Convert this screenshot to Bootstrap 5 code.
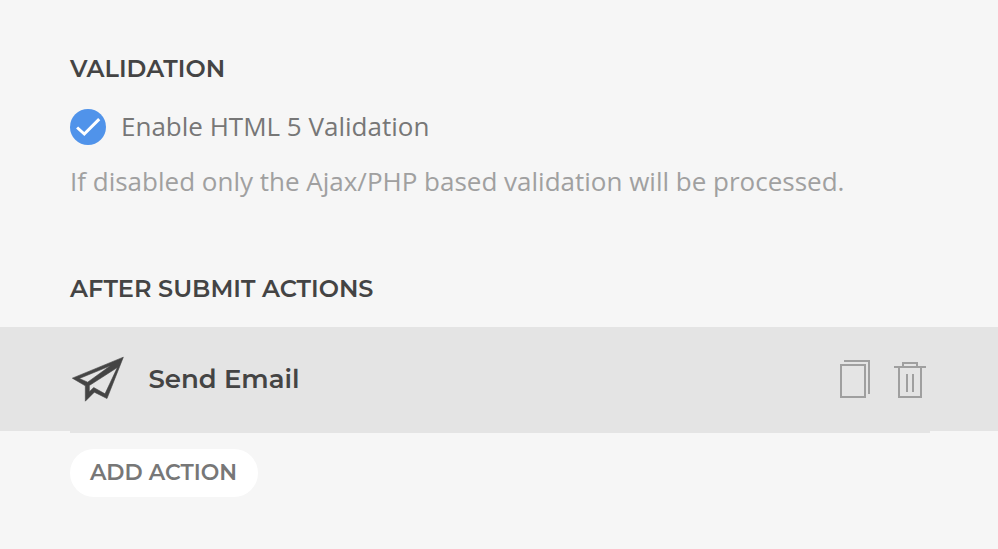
<!DOCTYPE html>
<html lang="en">
<head>
<meta charset="utf-8">
<meta name="viewport" content="width=device-width, initial-scale=1">
<title>Form settings</title>
<link rel="stylesheet" href="https://cdn.jsdelivr.net/npm/bootstrap@5.3.0/dist/css/bootstrap.min.css">
<style>
body{background:#f6f6f6;color:#444;font-family:"Open Sans","Noto Sans",sans-serif;height:549px;overflow:hidden}
.heading{font-family:Montserrat,Inter,sans-serif;font-weight:600;white-space:nowrap;line-height:30px;font-size:24px}
.settings{padding:54px 70px 0}
.option{height:36px;margin-top:25px;gap:15px;font-size:26px;color:#777}
.option span{padding-bottom:2px}
.hint{font-size:26px;line-height:36px;margin-top:18px;color:#a0a0a0;white-space:nowrap}
.after{margin-top:75px}
.action-row{height:104px;margin-top:23px;padding:0 72px 0 70px;background:#e4e4e4}
.action-name{font-size:26px;margin-left:22.5px}
.tools{gap:24px}
.rule{height:2px;margin:0 68px 0 70px;background:#e4e4e4}
.add{margin:16px 0 0 70px;width:188px;height:48px;background:#fff;color:#777;font-size:22px}
.add span{margin-right:1px}
.add:hover{background:#fff;color:#666}
</style>
</head>
<body>
<section class="settings">
<h2 class="heading mb-0">VALIDATION</h2>
<label class="option d-flex align-items-center"><svg width="36" height="36"><circle cx="18" cy="18" r="18" fill="#5093ea"/><path d="M7.100 18.500L14.300 25L29.200 10.100" fill="none" stroke="#fff" stroke-width="3"/></svg><span>Enable HTML 5 Validation</span></label>
<p class="hint mb-0">If disabled only the Ajax/PHP based validation will be processed.</p>
<h2 class="heading after mb-0">AFTER SUBMIT ACTIONS</h2>
</section>
<div class="action-row d-flex align-items-center">
<svg width="56" height="50" viewBox="30 27.500 168 150" aria-hidden="true"><path fill="#444" stroke="#444" stroke-width="1.800" fill-rule="evenodd" d="M190 37L37 100L76 123V169L103 142L141 161ZM58 101L151 63L83 112ZM172 68L135 147L101 128L88 141V122Z"/></svg>
<span class="heading action-name">Send Email</span>
<div class="tools d-flex ms-auto" role="group">
<svg width="30" height="38" fill="none" stroke="#9f9f9f" stroke-width="2" aria-label="Duplicate"><path d="M1 5H25V37H1ZM4 1H29V34"/></svg>
<svg width="32" height="38" fill="none" stroke="#9f9f9f" stroke-width="2" aria-label="Delete"><path d="M0 7H32M9 7V3H23V7M5 7V37H27V7M13 14V32M19 14V32"/></svg>
</div>
</div>
<div class="rule"></div>
<button type="button" class="add heading btn rounded-pill border-0 p-0"><span>ADD ACTION</span></button>
<script src="https://cdn.jsdelivr.net/npm/bootstrap@5.3.0/dist/js/bootstrap.bundle.min.js"></script>
</body>
</html>
